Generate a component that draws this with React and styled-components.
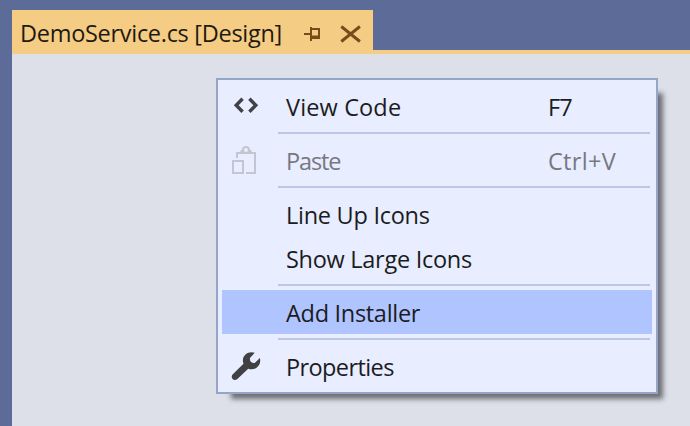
import React from "react";
import styled, { createGlobalStyle } from "styled-components";

const GlobalStyle = createGlobalStyle`
  body { margin: 0; overflow: hidden; }
  * { box-sizing: border-box; }
`;

const Window = styled.main`
  display: flex;
  flex-direction: column;
  width: 690px;
  height: 426px;
  padding: 10px 0 0 12px;
  background: #5d6b99;
  color: #1e1e1e;
  font: 23.5px/44px "Open Sans", "Noto Sans", sans-serif;
`;

const TabStrip = styled.header`
  display: flex;
  height: 44px;
  flex: none;
  border-bottom: 4px solid #f5cc84;
`;

const Tab = styled.div`
  display: flex;
  align-items: center;
  width: 361px;
  height: 40px;
  padding-left: 8px;
  background: #f5cc84;
`;

const Label = styled.span`
  white-space: pre;
  letter-spacing: ${(p) => p.$track || 0}px;
`;

const TabTitle = styled(Label)`
  width: 284px;
  height: 40px;
  line-height: 47px;
  flex: none;
  color: #1e1a10;
`;

const TabIcons = styled.svg`
  width: 60px;
  height: 20px;
  margin-top: 8px;
  flex: none;
`;

const Designer = styled.section`
  flex: 1;
  padding: 24px 0 0 204px;
  background: #dde0e8;
`;

const Menu = styled.div`
  width: 442px;
  height: 316px;
  padding: 4px;
  border: 2px solid #95a5ca;
  background: #e8edff;
  box-shadow: 10px 10px 5px -5px rgba(50, 50, 54, 0.65);
`;

const Item = styled.div`
  display: grid;
  grid-template-columns: 64px 262px 1fr;
  height: 44px;
  line-height: 47px;
  background: ${(p) => (p.$active ? "#b0c4ff" : "transparent")};
  color: ${(p) => (p.$disabled ? "#77787f" : "#1b1c21")};
`;

const Separator = styled.div`
  height: 2px;
  margin: 4px 2px 4px 56px;
  background: #bdc6e4;
`;

const Icon = styled.svg`
  width: 44px;
  height: 44px;
`;

const CodeIcon = () => (
  <Icon viewBox="0 0 44 44" fill="none" stroke="#414249" strokeWidth="3.4">
    <path d="M20.6 14.7 14.2 21.2l6.4 6.5M27.4 14.7l6.4 6.5-6.4 6.5" />
  </Icon>
);

const PasteIcon = () => (
  <Icon viewBox="0 0 44 44" fill="none" stroke="#c2c6d2" strokeWidth="2">
    <path d="M15 20v-5h18v20h-9M11 23h10v12H11z" />
    <circle cx="24" cy="12" r="3" />
    <path d="M18.5 12h3v2h5v-2h3v4h-11z" fill="#c2c6d2" stroke="none" />
  </Icon>
);

const WrenchIcon = () => (
  <Icon viewBox="0 0 44 44" fill="#414144">
    <path d="M32.7 8.8c-5.5-2.2-12.2 1.6-11.8 8.2.1 1 .3 1.9.6 2.8L10.8 30.3c-3.2 3.4 1.3 7.8 4.6 4.7L26.2 24.7c7.3 2.4 13.5-3.5 11.7-10.7l-5.2 4.9c-3 .5-5.3-1.9-4.7-5Z" />
  </Icon>
);

const groups = [
  [{ label: "View Code", keys: "F7", icon: CodeIcon, track: 0.14, keyTrack: -0.8 }],
  [{ label: "Paste", keys: "Ctrl+V", icon: PasteIcon, disabled: true, track: -1.1, keyTrack: 0.3 }],
  [{ label: "Line Up Icons", track: -0.26 }, { label: "Show Large Icons", track: -0.28 }],
  [{ label: "Add Installer", active: true, track: -0.3 }],
  [{ label: "Properties", icon: WrenchIcon, track: -0.6 }],
];

export default function App() {
  return (
    <>
      <GlobalStyle />
      <Window>
        <TabStrip>
          <Tab>
            <TabTitle $track={-0.29}>DemoService.cs [Design]</TabTitle>
            <TabIcons viewBox="0 0 60 20" fill="none" stroke="#7a4b1a" strokeWidth="2">
              <path d="M0 10h7M7 3v14M7 5h8v9H7" />
              <path d="M7 11.5h9V15H7z" fill="#7a4b1a" stroke="none" />
              <path d="M37.3 2.5l18.6 15M55.9 2.5l-18.6 15" strokeWidth="2.9" />
            </TabIcons>
          </Tab>
        </TabStrip>
        <Designer>
          <Menu role="menu">
            {groups.map((items, i) => (
              <React.Fragment key={items[0].label}>
                {i > 0 && <Separator />}
                {items.map(({ label, keys, icon: Glyph, active, disabled, track, keyTrack }) => (
                  <Item key={label} role="menuitem" $active={active} $disabled={disabled}>
                    <div>{Glyph && <Glyph />}</div>
                    <Label $track={track}>{label}</Label>
                    <Label $track={keyTrack}>{keys}</Label>
                  </Item>
                ))}
              </React.Fragment>
            ))}
          </Menu>
        </Designer>
      </Window>
    </>
  );
}
